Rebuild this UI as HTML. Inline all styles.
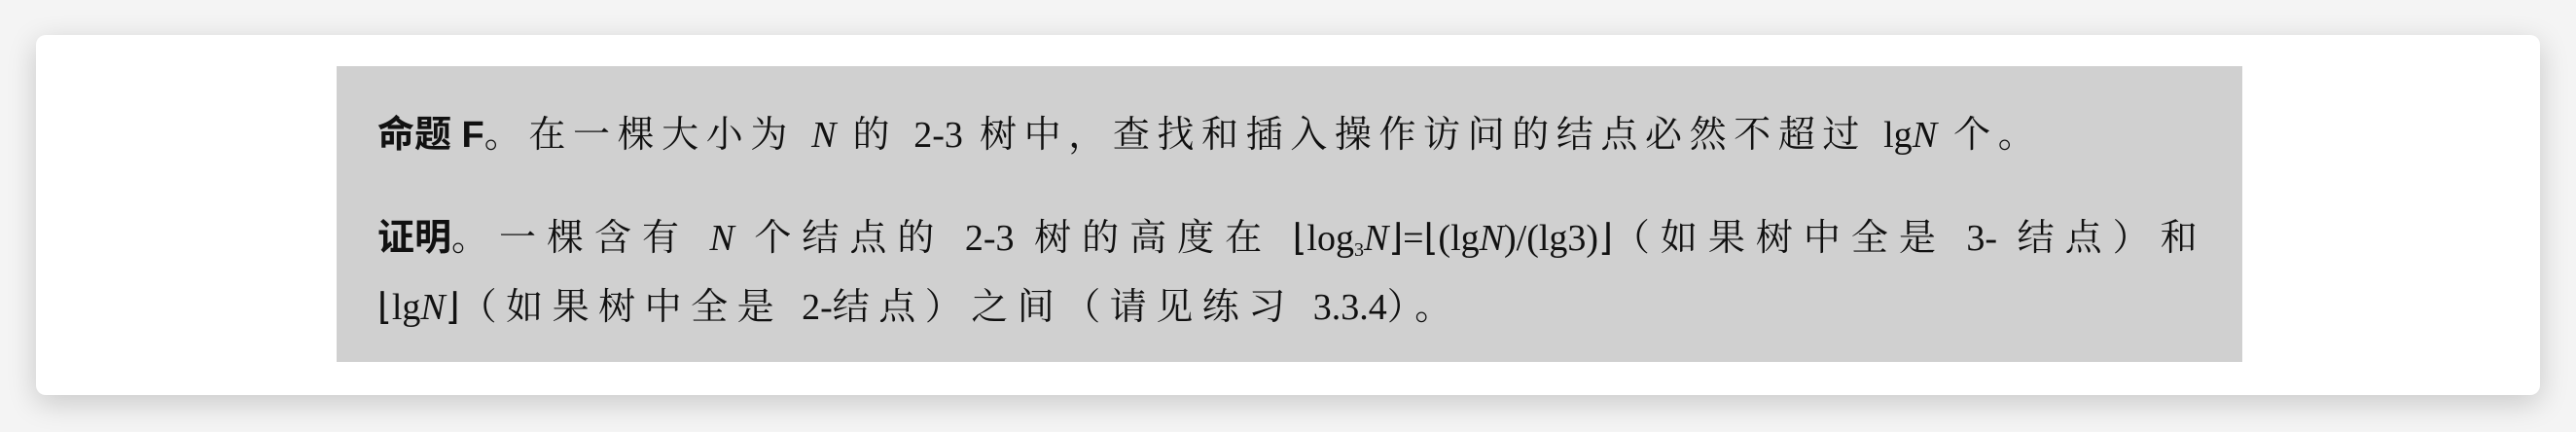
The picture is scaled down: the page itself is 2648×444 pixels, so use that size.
<!DOCTYPE html>
<html><head><meta charset="utf-8"><style>
html,body{margin:0;padding:0;background:#f4f4f4;width:2648px;height:444px;overflow:hidden}
.card{position:absolute;left:37px;top:36px;width:2574px;height:370px;background:#fff;border-radius:10px;box-shadow:0 8px 30px rgba(0,0,0,0.18)}
.box{position:absolute;left:346px;top:68px;width:1959px;height:304px;background:#d0d0d0}
.l{position:absolute;left:388px;white-space:nowrap;font-family:"Liberation Serif","Noto Serif CJK SC",serif;font-size:38px;color:#111;letter-spacing:6px}
.b{font-family:"Liberation Sans","Noto Sans CJK SC",sans-serif;font-weight:bold;letter-spacing:0}
.m{letter-spacing:0}
i{font-style:italic}
sub{font-size:20px;vertical-align:-6px;letter-spacing:0}
</style></head><body>
<div class="card"></div>
<div class="box"></div>
<div class="l" style="top:107px;letter-spacing:7.6px"><span class="b">命题 F</span>。在一棵大小为 <span class="m"><i>N</i></span> 的 <span class="m">2-3</span> 树中，查找和插入操作访问的结点必然不超过 <span class="m">lg<i>N</i></span> 个。</div>
<div class="l" style="top:213px;letter-spacing:11px"><span class="b">证明</span>。一棵含有 <span class="m"><i>N</i></span> 个结点的 <span class="m">2-3</span> 树的高度在 <span class="m">⌊log<sub>3</sub><i>N</i>⌋=⌊(lg<i>N</i>)/(lg3)⌋</span>（如果树中全是 <span class="m">3-</span> 结点）和</div>
<div class="l" style="top:284px;letter-spacing:9.5px"><span class="m">⌊lg<i>N</i>⌋</span>（如果树中全是 <span class="m">2-</span>结点）之间（请见练习 <span class="m">3.3.4</span>）。</div>
</body></html>
